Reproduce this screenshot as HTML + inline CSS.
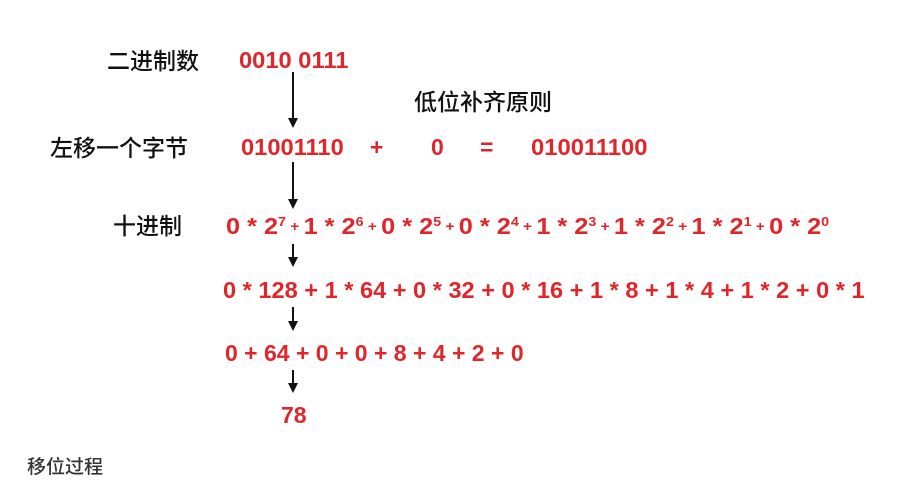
<!DOCTYPE html>
<html><head><meta charset="utf-8"><style>
body{margin:0;width:910px;height:497px;background:#fff;position:relative;overflow:hidden;font-family:"Liberation Sans","Noto Sans CJK SC",sans-serif}
.t{position:absolute;white-space:nowrap;line-height:26px;transform-origin:0 50%}
.r{color:#e0262b;font-weight:bold;font-size:23px}
.k{color:#111;font-size:23px;font-family:"Noto Sans CJK SC",sans-serif;font-weight:500}
sup{font-size:13px;vertical-align:8px;line-height:0}
.p{font-size:14px;vertical-align:3px}
.v{position:absolute;width:1.5px;background:#111}
.h{position:absolute;width:0;height:0;border-left:5px solid transparent;border-right:5px solid transparent;border-top:10px solid #111}
</style></head><body>
<div class="t k" style="left:107px;top:46px">二进制数</div>
<div class="t r" style="left:239px;top:47px;transform:scaleX(1.03)">0010 0111</div>
<div class="t k" style="left:414px;top:87px">低位补齐原则</div>
<div class="t k" style="left:50px;top:133px">左移一个字节</div>
<div class="t r" style="left:241px;top:134px;transform:scaleX(1.03)">01001110</div>
<div class="t r" style="left:370px;top:134px">+</div>
<div class="t r" style="left:431px;top:134px">0</div>
<div class="t r" style="left:480px;top:134px">=</div>
<div class="t r" style="left:531px;top:134px;transform:scaleX(1.035)">010011100</div>
<div class="t k" style="left:113px;top:211px">十进制</div>
<div class="t r" style="left:226px;top:213px;transform:scaleX(1.1)">0 * 2<sup>7</sup><span class="p"> + </span>1 * 2<sup>6</sup><span class="p"> + </span>0 * 2<sup>5</sup><span class="p"> + </span> 0 * 2<sup>4</sup><span class="p"> + </span>1 * 2<sup>3</sup><span class="p"> + </span> 1 * 2<sup>2</sup><span class="p"> + </span>1 * 2<sup>1</sup><span class="p"> + </span>0 * 2<sup>0</sup></div>
<div class="t r" style="left:223px;top:277px;transform:scaleX(1.025)">0 * 128 + 1 * 64 + 0 * 32 + 0 * 16 + 1 * 8 + 1 * 4 + 1 * 2 + 0 * 1</div>
<div class="t r" style="left:225px;top:340px">0 + 64 + 0 + 0 + 8 + 4 + 2 + 0</div>
<div class="t r" style="left:281px;top:402px">78</div>
<div class="t" style="left:27px;top:453px;font-size:19px;color:#333;font-family:'Noto Sans CJK SC',sans-serif;font-weight:500">移位过程</div>
<div class="v" style="left:292px;top:72px;height:48px"></div><div class="h" style="left:288px;top:118px"></div>
<div class="v" style="left:292px;top:162px;height:38px"></div><div class="h" style="left:288px;top:199px"></div>
<div class="v" style="left:292px;top:244px;height:14px"></div><div class="h" style="left:288px;top:257px"></div>
<div class="v" style="left:292px;top:307px;height:15px"></div><div class="h" style="left:288px;top:321px"></div>
<div class="v" style="left:292px;top:370px;height:14px"></div><div class="h" style="left:288px;top:383px"></div>
</body></html>
